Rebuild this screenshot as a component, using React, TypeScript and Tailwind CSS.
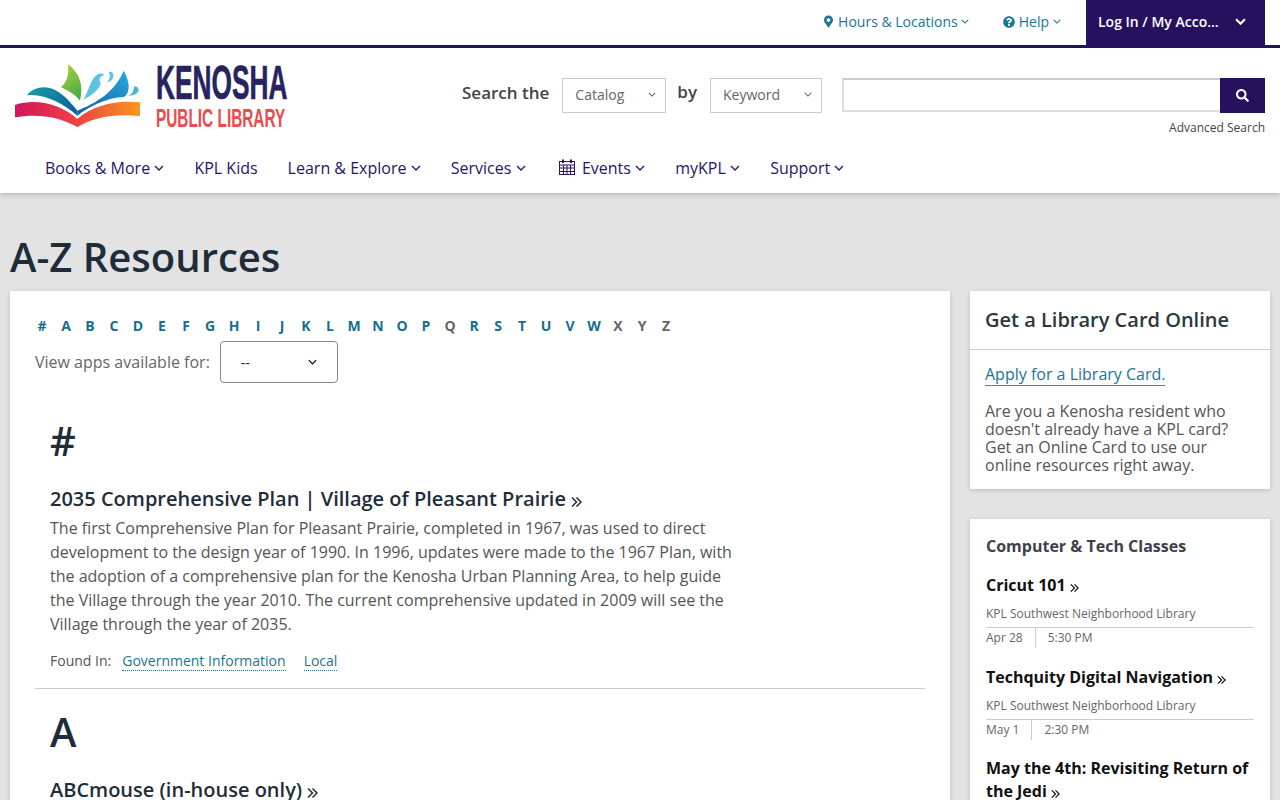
import React from "react";
import { FaMapMarkerAlt, FaQuestionCircle, FaSearch } from "react-icons/fa";

const Chevron = ({ className = "w-[10px] h-[6px]" }: { className?: string }) => (
  <svg viewBox="0 0 10 6" className={`inline-block ${className}`} fill="none" stroke="currentColor" strokeWidth="1.3">
    <path d="M1 1l4 4 4-4" />
  </svg>
);

const DoubleAngle = ({ className = "" }: { className?: string }) => (
  <svg viewBox="0 0 11 11" className={`inline-block align-[-2px] ${className}`} fill="none" stroke="currentColor" strokeWidth="1.5">
    <path d="M1 1l4.5 4.5L1 10M5.5 1L10 5.5 5.5 10" />
  </svg>
);

const CalendarIcon = () => (
  <svg viewBox="0 0 16 16" className="w-[16px] h-[16px] mr-[3px] -mt-[2px]" fill="none" stroke="currentColor" strokeWidth="1">
    <rect x="0.5" y="2.5" width="15" height="13" />
    <path d="M0.5 6h15M0.5 9h15M0.5 12.5h15M4.5 6v9.5M8 6v9.5M11.5 6v9.5" />
    <path d="M4 0.5v3.5M12 0.5v3.5" strokeWidth="2" />
  </svg>
);

const Logo = () => (
  <svg viewBox="0 0 900 270" className="w-[300px] h-[90px] shrink-0 mt-[2px]" role="img" aria-label="Kenosha Public Library">
    <defs>
      <linearGradient id="swoosh" x1="0" x2="1" y1="0" y2="0">
        <stop offset="0" stopColor="#d3145f" />
        <stop offset="0.5" stopColor="#ee4242" />
        <stop offset="1" stopColor="#f8971d" />
      </linearGradient>
      <linearGradient id="wingL" x1="0" x2="1" y1="0" y2="0.6">
        <stop offset="0" stopColor="#1aa3a0" />
        <stop offset="1" stopColor="#0d62a5" />
      </linearGradient>
      <linearGradient id="wingR" x1="0" x2="1" y1="1" y2="0">
        <stop offset="0" stopColor="#0d5fa3" />
        <stop offset="1" stopColor="#2aa7df" />
      </linearGradient>
      <linearGradient id="leaf" x1="0" x2="0.4" y1="0" y2="1">
        <stop offset="0" stopColor="#b5d334" />
        <stop offset="1" stopColor="#4fae48" />
      </linearGradient>
    </defs>
    <path d="M45 165C105 145 180 160 232 207C280 165 350 150 420 157L420 199C350 190 285 200 232 231C180 200 110 190 45 202Z" fill="url(#swoosh)" />
    <path d="M80 136C100 112 135 105 165 120C190 132 215 160 232 182L232 197C190 162 135 130 80 136Z" fill="url(#wingL)" />
    <path d="M232 182C290 158 345 125 371 62C392 100 390 128 372 141C320 143 270 168 232 197Z" fill="url(#wingR)" />
    <path d="M204 42C238 68 252 105 240 152C222 130 200 120 183 112C203 95 207 70 204 42Z" fill="url(#leaf)" />
    <path d="M250 150C268 120 270 90 290 75C300 68 310 70 314 76C298 78 296 88 302 100C298 120 275 135 250 150Z" fill="#5cc3e4" />
    <path d="M320 97C330 90 332 76 326 66C335 62 342 70 340 80C338 90 330 96 320 97Z" fill="#5cc3e4" />
    <path d="M385 137C398 132 402 120 402 110C412 108 418 116 415 124C410 134 398 138 385 137Z" fill="#45b5d8" />
    <text transform="translate(468 148) scale(0.54 1)" fontFamily="'Liberation Sans', sans-serif" fontWeight="700" fontSize="146" fill="#272361" stroke="#272361" strokeWidth="2">KENOSHA</text>
    <text transform="translate(468 232) scale(0.615 1)" fontFamily="'Liberation Sans', sans-serif" fontWeight="700" fontSize="75" fill="#ea4c4b">PUBLIC LIBRARY</text>
  </svg>
);

const navItems = [
  { label: "Books & More", menu: true },
  { label: "KPL Kids", menu: false },
  { label: "Learn & Explore", menu: true },
  { label: "Services", menu: true },
  { label: "Events", menu: true, icon: true },
  { label: "myKPL", menu: true },
  { label: "Support", menu: true },
];

const letters = "#ABCDEFGHIJKLMNOPQRSTUVWXYZ".split("");
const noLink = ["Q", "X", "Y", "Z"];

const classes = [
  { title: "Cricut 101", place: "KPL Southwest Neighborhood Library", date: "Apr 28", time: "5:30 PM" },
  { title: "Techquity Digital Navigation", place: "KPL Southwest Neighborhood Library", date: "May 1", time: "2:30 PM" },
];

export default function App() {
  return (
    <div className="h-screen overflow-hidden bg-[#e3e3e3] text-[#555] font-['Open_Sans',sans-serif]">
      <header className="bg-white shadow-[0_1px_6px_rgba(0,0,0,0.25)] h-[193px]">
        <div className="h-[48px] border-b-[3px] border-[#26115f] flex justify-end pr-[15px] text-[14px] text-[#1b7594]">
          <a className="flex items-center gap-[5px] mr-[34px] pb-[2px]">
            <FaMapMarkerAlt className="w-[9px] h-[13px]" />
            <span>Hours &amp; Locations</span>
            <Chevron className="w-[8px] h-[5px] -ml-[2px]" />
          </a>
          <a className="flex items-center gap-[4px] mr-[25px] pb-[2px]">
            <FaQuestionCircle className="w-[12px] h-[12px]" />
            Help <Chevron className="w-[8px] h-[5px]" />
          </a>
          <a className="w-[179px] h-[48px] bg-[#26115f] text-white font-semibold flex items-center justify-between pl-[12px] pr-[19px] pb-[5px]">
            Log In / My Acco...
            <Chevron className="w-[11px] h-[7px] stroke-[2]" />
          </a>
        </div>
        <div className="flex items-start">
          <Logo />
          <div className="flex-1 pt-[30px] pr-[15px]">
            <div className="flex items-start">
              <span className="ml-[162px] mt-[2px] text-[17px] font-semibold text-[#444]">Search the</span>
              <div className="ml-[13px] w-[104px] h-[35px] border border-[#ccc] flex items-center justify-between pl-[12px] pr-[9px] pb-[2px] text-[14px] text-[#666]">
                Catalog <Chevron className="w-[8px] h-[5px]" />
              </div>
              <span className="ml-[11px] mt-[1px] text-[17px] font-semibold text-[#444]">by</span>
              <div className="ml-[13px] w-[112px] h-[35px] border border-[#ccc] flex items-center justify-between pl-[12px] pr-[9px] pb-[2px] text-[14px] text-[#666]">
                Keyword <Chevron className="w-[8px] h-[5px]" />
              </div>
              <div className="ml-[20px] flex-1 flex">
                <div className="flex-1 h-[34px] border-2 border-r-0 border-[#ddd] border-t-[#ccc]" />
                <button className="w-[45px] h-[35px] bg-[#26115f] text-white flex items-center justify-center">
                  <FaSearch className="w-[13px] h-[13px]" />
                </button>
              </div>
            </div>
            <div className="text-right text-[12px] leading-[16px] mt-[7px] text-[#444]">Advanced Search</div>
          </div>
        </div>
        <nav className="flex mt-[16px] pl-[45px] gap-[30px] text-[16px] leading-[24px] text-[#2a1467]">
          {navItems.map((item) => (
            <a key={item.label} className={`flex items-center gap-[4.3px] ${item.icon ? "ml-[3px]" : ""}`}>
              {item.icon && <CalendarIcon />}
              {item.label}
              {item.menu && <Chevron />}
            </a>
          ))}
        </nav>
      </header>

      <h1 className="pl-[10px] pt-[37px] pb-[7px] text-[40px] leading-[54px] font-semibold text-[#1f2d3a]">A-Z Resources</h1>

      <div className="flex items-start gap-[20px] px-[10px]">
        <main className="w-[940px] bg-white shadow-[0_1px_4px_rgba(0,0,0,0.2)] px-[25px] pt-[25px]">
          <div className="flex text-[14px] leading-[20px] font-bold -ml-[5px]">
            {letters.map((l) => (
              <span key={l} className={`w-[24px] text-center ${noLink.includes(l) ? "text-[#666]" : "text-[#136f93]"}`}>{l}</span>
            ))}
          </div>
          <div className="flex items-center mt-[5px]">
            <span className="text-[16px] text-[#666] mr-[10px]">View apps available for:</span>
            <div className="w-[118px] h-[42px] border border-[#888] rounded-[4px] flex items-center justify-between pl-[20px] pr-[20px] text-[14px] text-[#222]">
              -- <Chevron className="w-[9px] h-[6px] text-black" />
            </div>
          </div>

          <div className="pl-[15px] pt-[31px] w-[705px]">
            <h2 className="text-[40px] leading-[54px] font-semibold text-[#1f2d3a]">#</h2>
            <h3 className="mt-[17px] text-[20px] leading-[27px] font-semibold text-[#1f2d3a] whitespace-nowrap">
              2035 Comprehensive Plan | Village of Pleasant Prairie{" "}
              <DoubleAngle className="w-[11px] h-[12px]" />
            </h3>
            <p className="mt-[4px] text-[16px] leading-[24px] text-[#555]">
              The first Comprehensive Plan for Pleasant Prairie, completed in 1967, was used to direct development to the design year of 1990. In 1996, updates were made to the 1967 Plan, with the adoption of a comprehensive plan for the Kenosha Urban Planning Area, to help guide the Village through the year 2010. The current comprehensive updated in 2009 will see the Village through the year of 2035.
            </p>
            <div className="mt-[15px] flex text-[14px] leading-[19px]">
              <span className="text-[#555] mr-[11px]">Found In:</span>
              <a className="text-[#1b7594] border-b border-dotted border-[#1b7594] mr-[18px]">Government Information</a>
              <a className="text-[#1b7594] border-b border-dotted border-[#1b7594]">Local</a>
            </div>
          </div>
          <hr className="mt-[17px] border-[#ccc]" />
          <div className="pl-[15px] pt-[16px] w-[705px]">
            <h2 className="text-[40px] leading-[54px] font-semibold text-[#1f2d3a]">A</h2>
            <h3 className="mt-[17px] text-[20px] leading-[27px] font-semibold text-[#1f2d3a]">
              ABCmouse (in-house only){" "}
              <DoubleAngle className="w-[11px] h-[12px]" />
            </h3>
          </div>
        </main>

        <aside className="w-[300px] shrink-0">
          <section className="bg-white shadow-[0_1px_4px_rgba(0,0,0,0.2)] h-[198px]">
            <h2 className="h-[59px] border-b border-[#ccc] px-[15px] pt-[15px] text-[20px] leading-[27px] font-semibold text-[#2d3640]">Get a Library Card Online</h2>
            <div className="px-[15px] pt-[13px] text-[16px] leading-[18px] text-[#555]">
              <a className="text-[#1b7594] border-b border-[#777] leading-[22px] inline-block">Apply for a Library Card.</a>
              <p className="mt-[16px]">Are you a Kenosha resident who doesn't already have a KPL card? Get an Online Card to use our online resources right away.</p>
            </div>
          </section>
          <section className="mt-[30px] bg-white shadow-[0_1px_4px_rgba(0,0,0,0.2)] px-[16px] pt-[16px] pb-[30px]">
            <h2 className="text-[16px] leading-[22px] font-bold text-[#3d4149]">Computer &amp; Tech Classes</h2>
            {classes.map((c) => (
              <div key={c.title} className="mt-[18px] first-of-type:mt-[17px]">
                <h3 className="text-[16px] leading-[23px] font-bold text-[#111]">
                  {c.title} <DoubleAngle className="w-[9px] h-[10px]" />
                </h3>
                <div className="mt-[9px] text-[12px] leading-[16px] text-[#666] pb-[5px] border-b border-[#ccc]">{c.place}</div>
                <div className="flex text-[12px] leading-[20px] text-[#666]">
                  <span className="pr-[12px] border-r border-[#ccc]">{c.date}</span>
                  <span className="pl-[12px]">{c.time}</span>
                </div>
              </div>
            ))}
            <h3 className="mt-[17px] text-[16px] leading-[23px] font-bold text-[#111]">
              May the 4th: Revisiting Return of the Jedi <DoubleAngle className="w-[9px] h-[10px]" />
            </h3>
          </section>
        </aside>
      </div>
    </div>
  );
}
